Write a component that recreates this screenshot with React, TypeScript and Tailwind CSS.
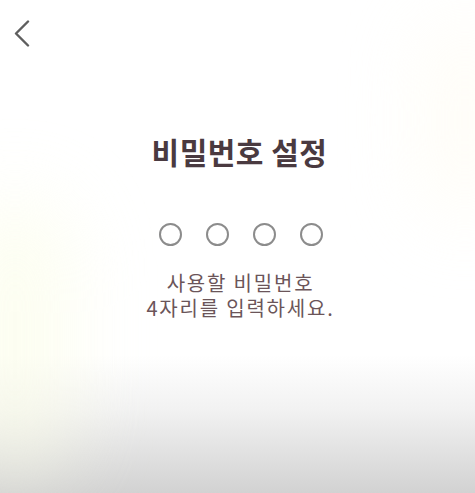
const font = { fontFamily: '"Noto Sans CJK KR", "Noto Sans", sans-serif' };

export default function App() {
  const digits = [0, 1, 2, 3];

  return (
    <div
      className="relative w-[475px] h-[493px] overflow-hidden bg-gradient-to-b from-white from-[72%] via-[#f2f2f2] via-[83%] to-[#d2d2d2]"
      style={font}
    >
      {/* faint glow spots */}
      <div className="absolute left-[-40px] top-[200px] w-[110px] h-[280px] rounded-full bg-[#fbfde6] blur-2xl opacity-60" />
      <div className="absolute right-[-30px] top-[20px] w-[80px] h-[200px] rounded-full bg-[#fffbf0] blur-2xl opacity-60" />

      <div className="relative flex flex-col">
        <div className="h-[64px] pl-[14px] pt-[20px]">
          <svg width="16" height="27" viewBox="0 0 16 27" fill="none">
            <path d="M14 1.5 L2 13.5 L14 25.5" stroke="#5e5e5e" strokeWidth="2.4" strokeLinecap="round" strokeLinejoin="round" />
          </svg>
        </div>

        <h1 className="mt-[67px] text-center text-[30px] leading-[40px] font-bold text-[#4a3a40] tracking-[0.5px] pl-[4px]">
          비밀번호 설정
        </h1>

        <div className="mt-[52px] flex justify-center gap-[24px] pl-[6px]">
          {digits.map((d) => (
            <div key={d} className="w-[23px] h-[23px] rounded-full border-2 border-[#8c8c8c]" />
          ))}
        </div>

        <div className="mt-[25px] flex flex-col items-center gap-[1px] text-[20px] leading-[24px] text-[#6b5559] tracking-[1.8px] pl-[6px]">
          <p>사용할 비밀번호</p>
          <p>4자리를 입력하세요.</p>
        </div>
      </div>
    </div>
  );
}
